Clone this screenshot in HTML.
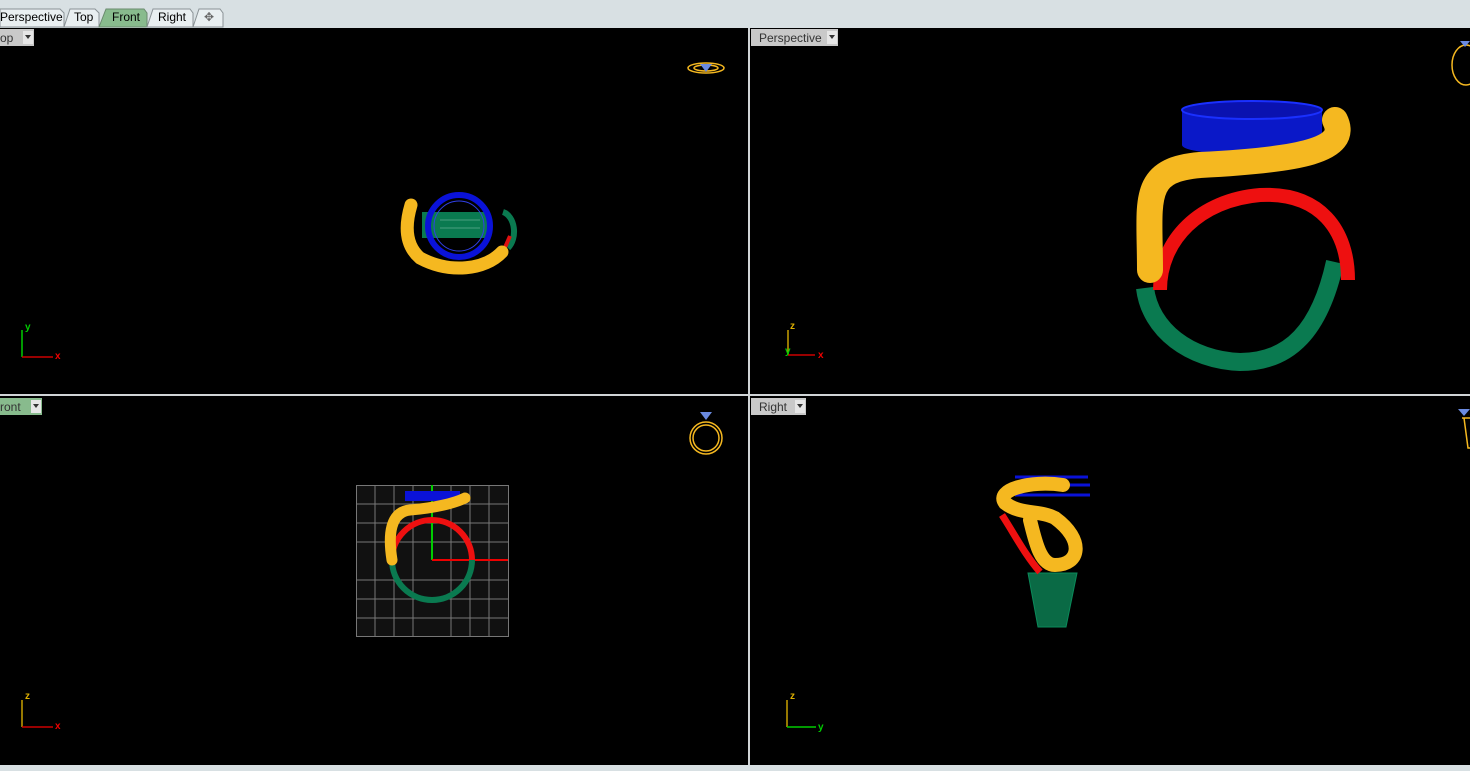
<!DOCTYPE html>
<html><head><style>
html,body{margin:0;padding:0;width:1470px;height:771px;overflow:hidden;background:#000;}
svg{display:block}
text{font-family:"Liberation Sans",sans-serif;}
</style></head><body>
<svg width="1470" height="771" viewBox="0 0 1470 771" xmlns="http://www.w3.org/2000/svg">
<rect x="0" y="0" width="1470" height="28" fill="#d8e0e3"/>
<!-- tabs -->
<path d="M0 27 V9 H60 L64 13 V27 Z" fill="#e9eff1" stroke="#8a9296"/>
<text x="0" y="21" font-size="12" fill="#000">Perspective</text>
<path d="M64 27 L70 9 H95 L99 13 V27 Z" fill="#e9eff1" stroke="#8a9296"/>
<text x="74" y="21" font-size="12" fill="#000">Top</text>
<path d="M99 27 L106 9 H144 L147 13 V27 Z" fill="#88bb8d" stroke="#6a8a6e"/>
<text x="112" y="21" font-size="12" fill="#000">Front</text>
<path d="M147 27 L153 9 H190 L193 13 V27 Z" fill="#e9eff1" stroke="#8a9296"/>
<text x="158" y="21" font-size="12" fill="#000">Right</text>
<path d="M193 27 L199 9 H220 L223 13 V27 Z" fill="#e9eff1" stroke="#8a9296"/>
<text x="204" y="21" font-size="12" fill="#666">✥</text>

<!-- dividers -->
<rect x="748" y="28" width="2" height="737" fill="#d0d4d6"/>
<rect x="0" y="394" width="1470" height="2" fill="#d0d4d6"/>
<rect x="0" y="765" width="1470" height="6" fill="#d8e0e3"/>

<!-- labels -->
<g font-size="12">
<rect x="0" y="29" width="34" height="17" fill="#c9c9c9"/><text x="0" y="42" fill="#333">op</text><rect x="23" y="31" width="10" height="13" fill="#e6e6e6"/><path d="M25 35h6l-3 4z" fill="#333"/>
<rect x="751" y="29" width="87" height="17" fill="#c9c9c9"/><text x="759" y="42" fill="#333">Perspective</text><rect x="827" y="31" width="10" height="13" fill="#e6e6e6"/><path d="M829 35h6l-3 4z" fill="#333"/>
<rect x="0" y="398" width="42" height="17" fill="#88bb8d"/><text x="0" y="411" fill="#333">ront</text><rect x="31" y="400" width="10" height="13" fill="#e6e6e6"/><path d="M33 404h6l-3 4z" fill="#333"/>
<rect x="751" y="398" width="55" height="17" fill="#c9c9c9"/><text x="759" y="411" fill="#333">Right</text><rect x="795" y="400" width="10" height="13" fill="#e6e6e6"/><path d="M797 404h6l-3 4z" fill="#333"/>
</g>

<!-- axes -->
<g stroke-width="1.5" font-size="10" font-weight="bold">
<line x1="22" y1="357" x2="22" y2="330" stroke="#0c0"/><line x1="22" y1="357" x2="53" y2="357" stroke="#c00"/>
<text x="25" y="330" fill="#0c0">y</text><text x="55" y="359" fill="#e00">x</text>
<line x1="788" y1="355" x2="788" y2="330" stroke="#c9a000"/><line x1="788" y1="355" x2="815" y2="355" stroke="#c00"/>
<text x="790" y="329" fill="#ddb000">z</text><text x="818" y="358" fill="#e00">x</text><text x="785" y="354" fill="#0c0">y</text>
<line x1="22" y1="727" x2="22" y2="700" stroke="#c9a000"/><line x1="22" y1="727" x2="53" y2="727" stroke="#c00"/>
<text x="25" y="699" fill="#ddb000">z</text><text x="55" y="729" fill="#e00">x</text>
<line x1="787" y1="727" x2="787" y2="700" stroke="#c9a000"/><line x1="787" y1="727" x2="816" y2="727" stroke="#0c0"/>
<text x="790" y="699" fill="#ddb000">z</text><text x="818" y="730" fill="#0c0">y</text>
</g>

<!-- small icons -->
<g fill="none" stroke="#f5b820" stroke-width="1.5">
<ellipse cx="706" cy="68" rx="18" ry="5"/><ellipse cx="706" cy="68" rx="12" ry="3"/>
<circle cx="706" cy="438" r="16"/><circle cx="706" cy="438" r="13"/>
<ellipse cx="1466" cy="65" rx="14" ry="20"/>
<path d="M1462 418 h10 M1464 418 l4 30 h6"/>
</g>
<path d="M700 64h12l-6 8z" fill="#6a8ae0"/><path d="M700 412h12l-6 8z" fill="#6a8ae0"/><path d="M1460 41h10l-5 6z" fill="#6a8ae0"/><path d="M1458 409h12l-6 7z" fill="#6a8ae0"/>

<!-- TOP view ring -->
<rect x="422" y="212" width="68" height="26" fill="#0a7a50"/>
<line x1="440" y1="220" x2="480" y2="220" stroke="#4aa080"/><line x1="440" y1="228" x2="480" y2="228" stroke="#4aa080"/>
<path d="M503 212 A14 20 0 0 1 508 248" fill="none" stroke="#0a7a50" stroke-width="6"/>
<path d="M510 236 L503 252" stroke="#e01010" stroke-width="4"/>
<path d="M411 205 C405 225 405 245 420 258 C450 274 485 270 502 252" fill="none" stroke="#f5b820" stroke-width="13" stroke-linecap="round"/>
<circle cx="459" cy="226" r="31" fill="none" stroke="#0a12d8" stroke-width="6"/>
<circle cx="459" cy="226" r="25" fill="none" stroke="#3040e8" stroke-width="1"/>

<!-- PERSPECTIVE ring -->
<path d="M1145 288 C1150 330 1190 360 1240 362 C1290 362 1320 330 1335 262" fill="none" stroke="#0a7a50" stroke-width="18"/>
<path d="M1160 290 C1160 240 1200 200 1260 195 C1320 192 1348 230 1348 280" fill="none" stroke="#ee1010" stroke-width="14"/>
<path d="M1182 110 V145 A70 10 0 0 0 1322 145 V110 Z" fill="#0a18c8"/>
<ellipse cx="1252" cy="110" rx="70" ry="9" fill="#0a12b0" stroke="#1a30ff" stroke-width="2"/>
<path d="M1335 120 C1350 150 1300 160 1200 165 C1140 170 1150 200 1150 270" fill="none" stroke="#f5b820" stroke-width="26" stroke-linecap="round"/>

<!-- FRONT grid -->
<g stroke="#777" stroke-width="1">
<rect x="356.5" y="485.5" width="152" height="151" fill="#111"/>
<path d="M375 485V637M394 485V637M413 485V637M451 485V637M470 485V637M489 485V637M356 504H508M356 523H508M356 542H508M356 580H508M356 599H508M356 618H508"/>
</g>
<line x1="432" y1="485" x2="432" y2="560" stroke="#0c0" stroke-width="2"/>
<line x1="432" y1="560" x2="508" y2="560" stroke="#e00" stroke-width="2"/>
<path d="M392 560 A40 40 0 0 0 472 560" fill="none" stroke="#0a7a50" stroke-width="6"/>
<path d="M392 560 A40 40 0 0 1 472 560" fill="none" stroke="#ee1010" stroke-width="6"/>
<rect x="405" y="491" width="55" height="10" fill="#0a12d8"/>
<path d="M392 560 C388 535 390 512 410 510 C435 508 455 503 465 498" fill="none" stroke="#f5b820" stroke-width="11" stroke-linecap="round"/>

<!-- RIGHT view -->
<path d="M1028 573 H1077 L1066 627 H1038 Z" fill="#0a6a45" stroke="#0a8a5a"/>
<g stroke="#0a12d8" stroke-width="3"><line x1="1015" y1="477" x2="1088" y2="477"/><line x1="1015" y1="485" x2="1090" y2="485"/><line x1="1015" y1="495" x2="1090" y2="495"/></g>
<path d="M1002 515 C1015 535 1025 555 1040 572" fill="none" stroke="#ee1010" stroke-width="7"/>
<path d="M1063 485 C1030 480 995 490 1005 503 C1020 515 1040 510 1055 518 C1085 540 1080 565 1055 565 C1040 565 1035 540 1030 520" fill="none" stroke="#f5b820" stroke-width="14" stroke-linecap="round"/>
</svg>
</body></html>
